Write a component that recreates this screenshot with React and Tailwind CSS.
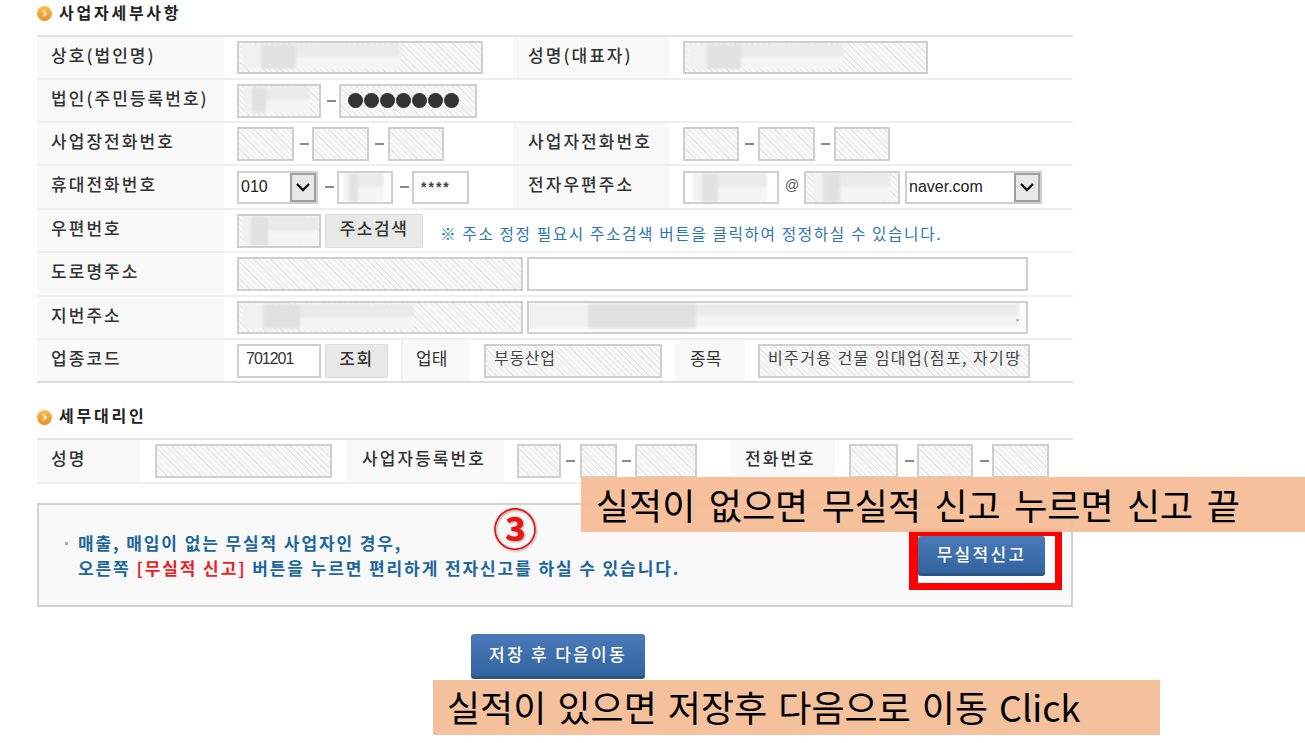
const hatch = "bg-[repeating-linear-gradient(45deg,#f8f8f8_0px,#f8f8f8_3px,#e8e8e8_3px,#e8e8e8_4px)]";
const base = "relative shrink-0 border-2 border-[#cfcfcf] overflow-hidden";

function Blur({ cls }) {
  return (
    <div className={`absolute flex blur-[1.5px] bg-white ${cls}`}>
      <div className="w-[12%] bg-[#f2f1f1]" />
      <div className="w-[22%] bg-[#e2e1e1]" />
      <div className="flex-1 flex flex-col">
        <div className="flex-1 bg-[#ebe9e9]" />
        <div className="flex-1 bg-[#f6f5f5]" />
      </div>
    </div>
  );
}

function F({ w, white, h = "h-[34px]", children, blur }) {
  return (
    <div className={`${base} ${w} ${h} ${white ? "bg-white" : hatch}`}>
      {blur && <Blur cls={blur} />}
      {children}
    </div>
  );
}

function Dash({ cls }) {
  return <div className={`shrink-0 h-[2px] bg-[#8a8a8a] ${cls}`} />;
}

function Label({ w, children, bold = true, pl = "pl-[14px]" }) {
  return (
    <div className={`shrink-0 h-full bg-[#f9f9f9] flex items-center pb-[6px] ${w} ${pl} ${bold ? "font-medium text-[17px] tracking-[2.05px]" : "text-[17px]"} text-[#333]`}>
      {children}
    </div>
  );
}

function Sel({ w, text }) {
  return (
    <div className={`${base} ${w} h-[33px] bg-white flex items-center justify-between font-['Liberation_Sans',sans-serif] text-[16px] text-[#222]`}>
      <span className="pl-[2px]">{text}</span>
      <div className="w-[26px] h-full border-2 border-[#a0a0a0] bg-[#e8e8e8] flex items-center justify-center">
        <svg width="16" height="12" viewBox="0 0 16 12" fill="none" stroke="#111" strokeWidth="2.4"><path d="M2 3l6 6 6-6" /></svg>
      </div>
    </div>
  );
}

function Head({ children, cls }) {
  return (
    <div className={`flex items-center gap-[7px] text-[16px] font-bold text-[#222] tracking-[2.75px] ${cls}`}>
      <svg width="15" height="15" viewBox="0 0 15 15">
        <defs>
          <linearGradient id="o" x1="0" y1="0" x2="0" y2="1">
            <stop offset="0" stopColor="#fbc04f" />
            <stop offset="1" stopColor="#ef8a1d" />
          </linearGradient>
        </defs>
        <circle cx="7.5" cy="7.5" r="7.5" fill="url(#o)" />
        <path d="M6 4.5l3 3-3 3" stroke="#fff" strokeWidth="1.6" fill="none" />
      </svg>
      <span className="pb-[4px]">{children}</span>
    </div>
  );
}

const rowC = "flex items-center border-b-2 border-[#efefef]";

function GrayBtn({ w, children }) {
  return (
    <div className={`shrink-0 ml-[4px] h-[34px] ${w} rounded-[2px] border border-[#dcdcdc] bg-[#e8e8e8] flex items-center justify-center pb-[5px] text-[17px] font-medium tracking-[1.5px] text-[#333]`}>
      {children}
    </div>
  );
}

const blueBtn = "flex items-center justify-center pb-[3px] rounded-[3px] bg-gradient-to-b from-[#4a7ab9] to-[#33649f] border-b-[3px] border-[#2b5487] text-white font-medium text-[17px] tracking-[2.3px]";

export default function App() {
  return (
    <div className="relative w-[1305px] h-[743px] overflow-hidden bg-white font-['Noto_Sans_CJK_KR',sans-serif]">
      <Head cls="ml-[37px] h-[35px] pb-[8px]">사업자세부사항</Head>

      <div className="ml-[37px] w-[1036px] border-t-2 border-[#e4e4e4]">
        <div className={`${rowC} h-[43px]`}>
          <Label w="w-[187px]">상호(법인명)</Label>
          <div className="w-[13px]" />
          <F w="w-[246px]" h="h-[33px]" blur="left-[3px] top-[1px] bottom-[3px] w-[158px]" />
          <div className="w-[30px]" />
          <Label w="w-[156px]" pl="pl-[15px]">성명(대표자)</Label>
          <div className="w-[14px]" />
          <F w="w-[245px]" h="h-[33px]" blur="left-[3px] top-[1px] bottom-[3px] w-[155px]" />
        </div>
        <div className={`${rowC} h-[43px]`}>
          <Label w="w-[187px]">법인(주민등록번호)</Label>
          <div className="w-[13px]" />
          <F w="w-[84px]" blur="left-[5px] top-[1px] bottom-[3px] w-[66px]" />
          <Dash cls="w-[9px] ml-[6px] mr-[3px]" />
          <F w="w-[138px]">
            <div className="h-full flex items-center pl-[7px] gap-[1px]">
              {[0, 1, 2, 3, 4, 5, 6].map((i) => (
                <div key={i} className="w-[15px] h-[15px] rounded-full bg-[#333]" />
              ))}
            </div>
          </F>
        </div>
        <div className={`${rowC} h-[43px]`}>
          <Label w="w-[187px]">사업장전화번호</Label>
          <div className="w-[13px]" />
          <F w="w-[57px]" />
          <Dash cls="w-[9px] ml-[6px] mr-[3px]" />
          <F w="w-[57px]" />
          <Dash cls="w-[9px] ml-[6px] mr-[4px]" />
          <F w="w-[56px]" />
          <div className="w-[69px]" />
          <Label w="w-[156px]" pl="pl-[15px]">사업자전화번호</Label>
          <div className="w-[14px]" />
          <F w="w-[56px]" />
          <Dash cls="w-[9px] ml-[6px] mr-[4px]" />
          <F w="w-[57px]" />
          <Dash cls="w-[9px] ml-[6px] mr-[4px]" />
          <F w="w-[56px]" />
        </div>
        <div className={`${rowC} h-[44px]`}>
          <Label w="w-[187px]">휴대전화번호</Label>
          <div className="w-[13px]" />
          <Sel w="w-[81px]" text="010" />
          <Dash cls="w-[9px] ml-[7px] mr-[3px]" />
          <F w="w-[56px]" h="h-[33px]" white blur="left-[5px] top-0 bottom-0 w-[40px]" />
          <Dash cls="w-[9px] ml-[7px] mr-[3px]" />
          <F w="w-[57px]" h="h-[33px]" white>
            <div className="h-full flex items-center pl-[7px] font-['Liberation_Sans',sans-serif] text-[14px] tracking-[2px] font-bold text-[#444]">****</div>
          </F>
          <div className="w-[44px]" />
          <Label w="w-[156px]" pl="pl-[15px]">전자우편주소</Label>
          <div className="w-[14px]" />
          <F w="w-[96px]" h="h-[33px]" white blur="left-[8px] top-0 bottom-0 w-[74px]" />
          <div className="w-[25px] shrink-0 pl-[6px] pb-[4px] text-[14px] text-[#555] font-['Liberation_Sans',sans-serif]">@</div>
          <F w="w-[96px]" h="h-[33px]" blur="left-[8px] top-0 bottom-0 w-[76px]" />
          <div className="w-[5px]" />
          <Sel w="w-[137px]" text="naver.com" />
        </div>
        <div className={`${rowC} h-[43px]`}>
          <Label w="w-[187px]">우편번호</Label>
          <div className="w-[13px]" />
          <F w="w-[84px]" blur="left-[3px] top-0 bottom-0 w-[76px]" />
          <GrayBtn w="w-[98px]">주소검색</GrayBtn>
          <div className="ml-[17px] text-[15.7px] text-[#2b78b0] pt-[6px] tracking-[1.6px] whitespace-nowrap">※ 주소 정정 필요시 주소검색 버튼을 클릭하여 정정하실 수 있습니다.</div>
        </div>
        <div className={`${rowC} h-[44px]`}>
          <Label w="w-[187px]">도로명주소</Label>
          <div className="w-[13px]" />
          <F w="w-[286px]" />
          <div className="w-[4px]" />
          <F w="w-[501px]" white />
        </div>
        <div className={`${rowC} h-[43px]`}>
          <Label w="w-[187px]">지번주소</Label>
          <div className="w-[13px]" />
          <F w="w-[286px]" h="h-[33px]" blur="left-[3px] top-[1px] bottom-[3px] w-[172px]" />
          <div className="w-[4px]" />
          <F w="w-[501px]" h="h-[33px]" white blur="left-0 top-0 bottom-[3px] w-[490px]">
            <span className="absolute right-[7px] top-[4px] text-[12px] text-[#555]">.</span>
          </F>
        </div>
        <div className={`${rowC} h-[43px] !border-[#dcdcdc]`}>
          <Label w="w-[187px]">업종코드</Label>
          <div className="w-[13px]" />
          <F w="w-[84px]" white>
            <div className="h-full flex items-center pl-[7px] pb-[3px] font-['Liberation_Sans',sans-serif] text-[16px] tracking-[-1px] text-[#333]">701201</div>
          </F>
          <GrayBtn w="w-[63px]">조회</GrayBtn>
          <div className="w-[13px]" />
          <div className="shrink-0 h-full w-[2px] bg-[#f1f1f1]" />
          <Label w="w-[67px]" bold={false} pl="pl-[13px]">업태</Label>
          <div className="w-[14px]" />
          <F w="w-[178px]">
            <div className="pl-[8px] text-[16px] tracking-[0.7px] text-[#444] leading-[22px]">부동산업</div>
          </F>
          <div className="w-[13px]" />
          <Label w="w-[70px]" bold={false} pl="pl-[15px]">종목</Label>
          <div className="w-[13px]" />
          <F w="w-[272px]">
            <div className="pl-[8px] text-[16px] tracking-[1.4px] text-[#444] leading-[22px] whitespace-nowrap">비주거용 건물 임대업(점포, 자기땅</div>
          </F>
        </div>
      </div>

      <Head cls="ml-[37px] mt-[24px] h-[20px]">세무대리인</Head>

      <div className="ml-[37px] mt-[11px] w-[1036px] border-t-2 border-[#e4e4e4]">
        <div className={`${rowC} h-[44px]`}>
          <Label w="w-[103px]">성명</Label>
          <div className="w-[15px]" />
          <F w="w-[177px]" />
          <div className="w-[15px]" />
          <Label w="w-[157px]" pl="pl-[15px]">사업자등록번호</Label>
          <div className="w-[13px]" />
          <F w="w-[44px]" />
          <Dash cls="w-[9px] ml-[5px] mr-[5px]" />
          <F w="w-[37px]" />
          <Dash cls="w-[9px] ml-[5px] mr-[4px]" />
          <F w="w-[62px]" />
          <div className="w-[33px]" />
          <Label w="w-[105px]" pl="pl-[15px]">전화번호</Label>
          <div className="w-[14px]" />
          <F w="w-[49px]" />
          <Dash cls="w-[9px] ml-[7px] mr-[3px]" />
          <F w="w-[56px]" />
          <Dash cls="w-[9px] ml-[7px] mr-[3px]" />
          <F w="w-[57px]" />
        </div>
      </div>

      <div className="relative ml-[37px] mt-[19px] w-[1036px] h-[104px] border-2 border-[#d2d2d2] bg-[#f9f9f9] pl-[39px] pt-[25px] text-[17px] font-bold leading-[25px] tracking-[1.9px] text-[#1b669e]">
        <div className="relative whitespace-nowrap">
          <span className="absolute -left-[13px] top-[12px] w-[3px] h-[3px] bg-[#aaa]" />
          매출, 매입이 없는 무실적 사업자인 경우,
        </div>
        <div className="whitespace-nowrap">
          오른쪽 <span className="text-[#f01c24]">[무실적 신고]</span> 버튼을 누르면 편리하게 전자신고를 하실 수 있습니다.
        </div>
        <div className="absolute left-[870px] top-[24px] w-[153px] h-[61px] border-y-[7px] border-l-[9px] border-r-[7px] border-[#ff0000] bg-white">
          <div className={`${blueBtn} w-[127px] h-[40px]`}>무실적신고</div>
        </div>
      </div>

      <div className="ml-[471px] mt-[27px]">
        <div className={`${blueBtn} w-[174px] h-[45px]`}>저장 후 다음이동</div>
      </div>

      <div className="absolute left-[495px] top-[507px] w-[40px] h-[40px] flex items-center justify-center text-[44px] font-bold leading-none text-[#f01010] drop-shadow-[1px_1px_1px_rgba(0,0,0,0.4)]">③</div>

      <div className="absolute left-[581px] top-[477px] w-[724px] h-[55px] pl-[15px] pb-[2px] flex items-center bg-[#f4bd96]/95 text-[36px] text-black whitespace-nowrap [word-spacing:5.4px]">
        실적이 없으면 무실적 신고 누르면 신고 끝
      </div>
      <div className="absolute left-[433px] top-[680px] w-[727px] h-[55px] pl-[14px] pb-[4px] flex items-center bg-[#f5c09c] text-[36px] text-black whitespace-nowrap [word-spacing:3px]">
        실적이 있으면 저장후 다음으로 이동 Click
      </div>
    </div>
  );
}
